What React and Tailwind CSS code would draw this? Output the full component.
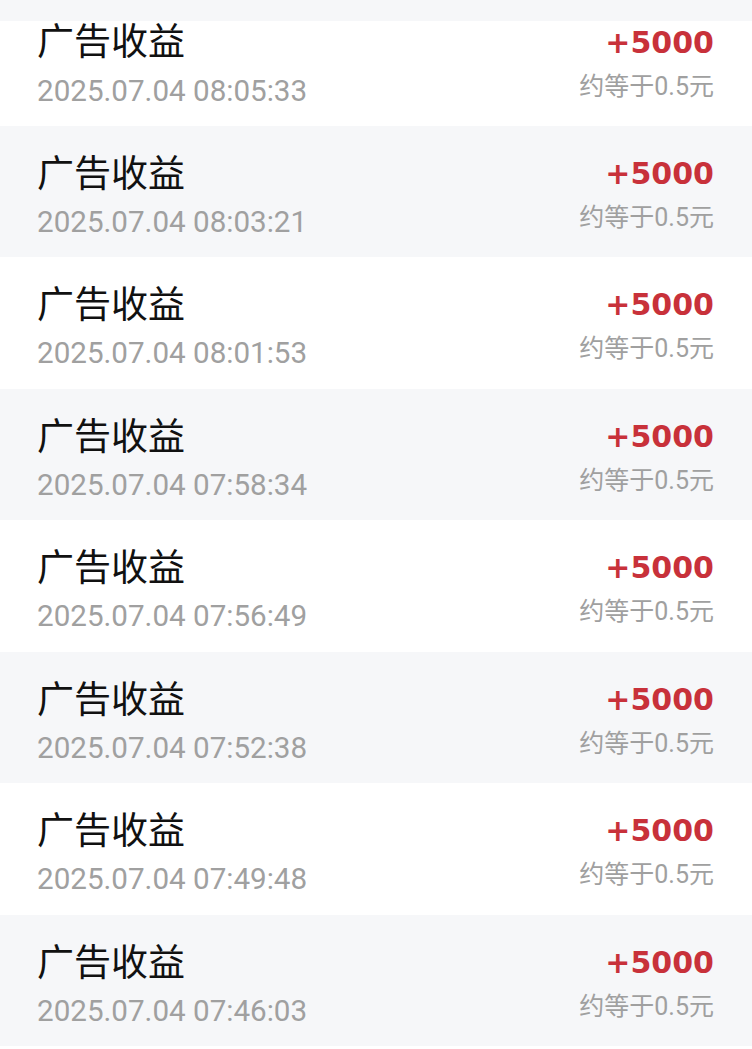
import React from 'react';

const records = [
    '2025.07.04 08:05:33',
    '2025.07.04 08:03:21',
    '2025.07.04 08:01:53',
    '2025.07.04 07:58:34',
    '2025.07.04 07:56:49',
    '2025.07.04 07:52:38',
    '2025.07.04 07:49:48',
    '2025.07.04 07:46:03',
];

// first row is scrolled partly under the top strip, so it gets its own offsets
const RecordRow = ({ time, striped, first = false }) => (
    <div
        className={`flex shrink-0 justify-between px-[37px] ${first ? 'h-[105px]' : 'h-[131.43px]'} ${striped ? 'bg-[#f6f7f9]' : 'bg-white'}`}
    >
        <div className={`flex flex-col ${first ? 'pt-0' : 'pt-[23px]'}`}>
            <p className={`text-[37px] text-[#111] font-['Noto_Sans_CJK_SC',sans-serif] ${first ? 'leading-[37px]' : 'leading-[44px]'}`}>
                广告收益
            </p>
            <p className={`text-[29.6px] leading-[36px] text-[#a0a0a0] font-['Roboto',sans-serif] ${first ? 'mt-[14.5px]' : 'mt-[11px]'}`}>
                {time}
            </p>
        </div>
        <div className={`flex flex-col items-end pr-px ${first ? 'pt-[1.5px]' : 'pt-[28px]'}`}>
            <p className="text-[30px] leading-[40px] font-bold text-[#c8313a] font-['DejaVu_Sans',sans-serif]">+5000</p>
            <p className="mt-[8px] text-[25px] leading-[32px] text-[#a0a0a0] font-['Roboto','Noto_Sans_CJK_SC',sans-serif]">
                约等于0.5元
            </p>
        </div>
    </div>
);

const App = () => {
    return (
        <div className="flex h-[1049px] w-[752px] flex-col overflow-hidden bg-white">
            <div className="h-[21px] shrink-0 bg-[#f6f7f9]" />
            <RecordRow time={records[0]} striped={false} first />
            {records.slice(1).map((time, i) => (
                <RecordRow key={time} time={time} striped={i % 2 === 0} />
            ))}
        </div>
    );
};

export default App;
